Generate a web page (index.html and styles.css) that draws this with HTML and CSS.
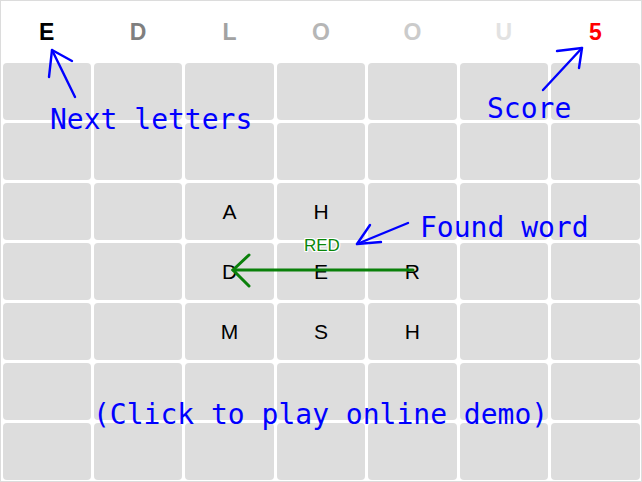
FILE: index.html
```html
<!DOCTYPE html>
<html>
<head>
<meta charset="utf-8">
<link rel="stylesheet" href="styles.css">
</head>
<body>
<div class="frame">
  <div class="topbar">
    <span class="next n0">E</span>
    <span class="next n1">D</span>
    <span class="next n2">L</span>
    <span class="next n3">O</span>
    <span class="next n4">O</span>
    <span class="next n5">U</span>
    <span class="score">5</span>
  </div>
  <div class="board">
    <div class="cell"></div><div class="cell"></div><div class="cell"></div><div class="cell"></div><div class="cell"></div><div class="cell"></div><div class="cell"></div>
    <div class="cell"></div><div class="cell"></div><div class="cell"></div><div class="cell"></div><div class="cell"></div><div class="cell"></div><div class="cell"></div>
    <div class="cell"></div><div class="cell"></div><div class="cell">A</div><div class="cell">H</div><div class="cell"></div><div class="cell"></div><div class="cell"></div>
    <div class="cell"></div><div class="cell"></div><div class="cell">D</div><div class="cell">E</div><div class="cell">R</div><div class="cell"></div><div class="cell"></div>
    <div class="cell"></div><div class="cell"></div><div class="cell">M</div><div class="cell">S</div><div class="cell">H</div><div class="cell"></div><div class="cell"></div>
    <div class="cell"></div><div class="cell"></div><div class="cell"></div><div class="cell"></div><div class="cell"></div><div class="cell"></div><div class="cell"></div>
    <div class="cell"></div><div class="cell"></div><div class="cell"></div><div class="cell"></div><div class="cell"></div><div class="cell"></div><div class="cell"></div>
  </div>
  <svg class="overlay" width="640" height="480" viewBox="0 0 640 480">
    <g class="found" fill="none" stroke="#0a800a" stroke-width="3" stroke-linecap="round">
      <path d="M412 269 L232 269"/>
      <path d="M248 254 L232 269 L248 285"/>
    </g>
    <g fill="none" stroke="#0000ff" stroke-width="2.4" stroke-linecap="round" stroke-linejoin="round">
      <path d="M74 96 L51 49"/>
      <path d="M71 60 L51 49 L48 76"/>
      <path d="M542 89 L581 47"/>
      <path d="M556 50 L581 47 L578 67"/>
      <path d="M407 222 L356 243"/>
      <path d="M369 224 L356 243 L380 241"/>
    </g>
  </svg>
  <span class="word-label">RED</span>
  <span class="note note-next">Next letters</span>
  <span class="note note-score">Score</span>
  <span class="note note-found">Found word</span>
  <span class="note note-demo">(Click to play online demo)</span>
</div>
</body>
</html>
```

FILE: styles.css
```css
html, body {
  margin: 0;
  padding: 0;
  background: #ffffff;
}

.frame {
  position: relative;
  width: 640px;
  height: 480px;
  border: 1px solid #dcdcdc;
  background: #ffffff;
  font-family: "Liberation Sans", Arial, sans-serif;
}

.topbar {
  height: 62px;
  display: grid;
  grid-template-columns: repeat(7, 1fr);
  align-items: center;
  justify-items: center;
  font-weight: bold;
  font-size: 23px;
}

.topbar span {
  line-height: 1;
  margin-top: 1px;
}

.n0 { color: #000000; }
.n1 { color: #7f7f7f; }
.n2 { color: #a2a2a2; }
.n3 { color: #b6b6b6; }
.n4 { color: #cbcbcb; }
.n5 { color: #e2e2e2; }
.score { color: #ff0000; }

.board {
  height: 418px;
  box-sizing: border-box;
  padding: 0 1.5px 1px 1.5px;
  display: grid;
  grid-template-columns: repeat(7, 1fr);
  grid-template-rows: repeat(7, 1fr);
  gap: 3px;
}

.cell {
  background: #dddddd;
  border-radius: 4px;
  display: flex;
  align-items: center;
  justify-content: center;
  font-size: 21px;
  color: #000000;
}

.overlay {
  position: absolute;
  left: 0;
  top: 0;
  pointer-events: none;
}

.word-label {
  position: absolute;
  left: 303px;
  top: 236px;
  font-size: 17px;
  color: #0a860a;
  line-height: 1;
  text-shadow: 1px 0 0 #fff, -1px 0 0 #fff, 0 1px 0 #fff, 0 -1px 0 #fff, 1px 1px 0 #fff, -1px -1px 0 #fff, 1px -1px 0 #fff, -1px 1px 0 #fff;
}

.note {
  position: absolute;
  font-family: "DejaVu Sans Mono", monospace;
  font-size: 28px;
  line-height: 1;
  color: #0000ff;
  white-space: nowrap;
}

.note-next { left: 49px; top: 105px; }
.note-score { left: 486px; top: 94px; }
.note-found { left: 419px; top: 213px; }
.note-demo { left: 92px; top: 400px; }
```
